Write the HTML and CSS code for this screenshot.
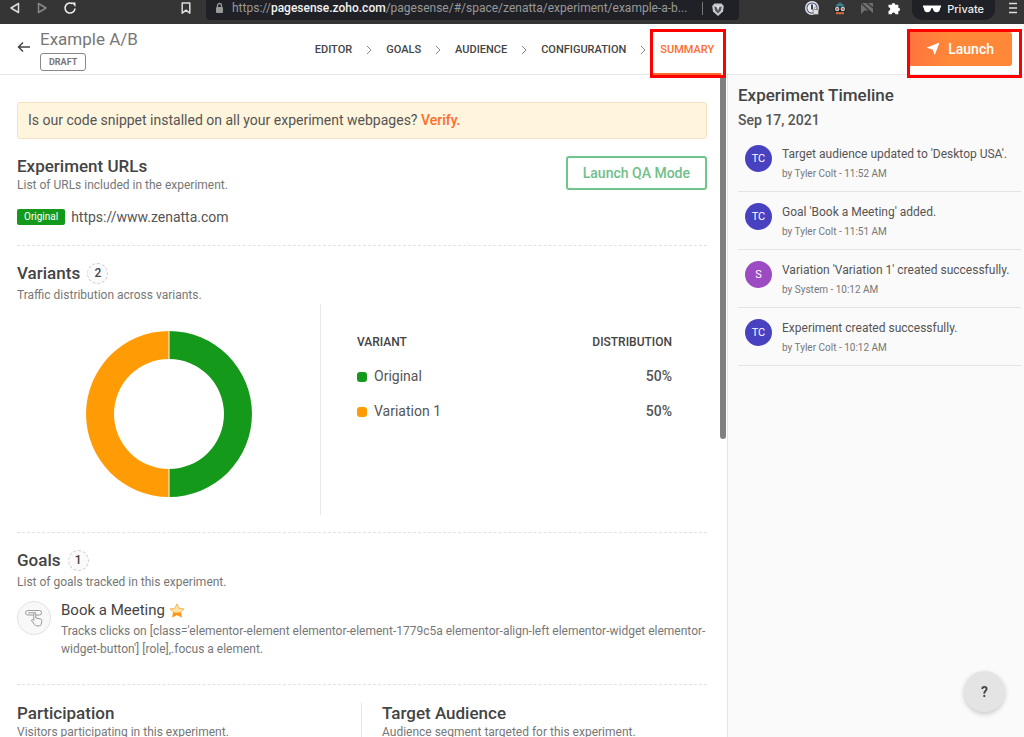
FILE: index.html
```html
<!DOCTYPE html>
<html lang="en">
<head>
<meta charset="utf-8">
<meta name="viewport" content="width=device-width, initial-scale=1">
<title>Example A/B - PageSense</title>
<link rel="stylesheet" href="styles.css">
</head>
<body>
<div class="toolbar">
  <div class="toolbar-nav">
    <button class="tool" aria-label="Back"><svg width="12" height="14" viewBox="0 0 12 14"><path d="M9.500 2.500v9L2 7z" fill="none" stroke="#ddd" stroke-width="1.500" stroke-linejoin="round"/></svg></button>
    <button class="tool" aria-label="Forward"><svg width="12" height="14" viewBox="0 0 12 14"><path d="M2.500 2.500v9L10 7z" fill="none" stroke="#888" stroke-width="1.500" stroke-linejoin="round"/></svg></button>
    <button class="tool" aria-label="Reload"><svg width="14" height="14" viewBox="0 0 14 14"><path d="M9.500 2.700A5 5 0 1 0 12 7.500" fill="none" stroke="#eee" stroke-width="1.600"/><path d="M8.500 1.500h4v4.500z" fill="#eee"/></svg></button>
  </div>
  <button class="tool bookmark" aria-label="Bookmark"><svg width="12" height="14" viewBox="0 0 12 14"><path d="M2.200 2h7.600v10.200L6 9.200l-3.800 3z" fill="none" stroke="#ddd" stroke-width="1.500" stroke-linejoin="round"/></svg></button>
  <div class="address">
    <svg width="9" height="12" viewBox="0 0 9 12"><rect x="1" y="5" width="7" height="6" rx="1" fill="#999"/><path d="M2.500 5V3.500a2 2 0 0 1 4 0V5" fill="none" stroke="#999" stroke-width="1.300"/></svg>
    <span class="url">https://<b>pagesense.zoho.com</b>/pagesense/#/space/zenatta/experiment/example-a-b...</span>
    <span class="address-bar"></span>
    <svg width="14" height="15" viewBox="0 0 14 15"><path d="M3.500 1.500h7l2.300 2.600-.8 5.400L7 14 2 9.500 1.200 4.100z" fill="#c9c9cf"/><path d="M3.300 4.500l2.400.8L7 9l1.300-3.700 2.400-.8-.8 4L7 11.500 4.100 8.500z" fill="#55555e"/><path d="M6.300 4h1.400L7 7z" fill="#fff"/></svg>
  </div>
  <div class="extensions">
    <button class="tool" aria-label="Password manager"><svg width="16" height="16" viewBox="0 0 16 16"><circle cx="8" cy="8" r="6.300" fill="#3d4a7c" stroke="#e6e6e6" stroke-width="1.400"/><circle cx="8" cy="8" r="4.600" fill="#eee"/><path d="M7 4.500h2v5H7z" fill="#33415c"/><rect x="9" y="9.500" width="5.500" height="5" rx="1" fill="#ddd" stroke="#555" stroke-width=".6"/><path d="M10.300 9.500V8.300a1.500 1.500 0 0 1 3 0v1.200" fill="none" stroke="#999"/></svg></button>
    <button class="tool" aria-label="Privacy extension"><svg width="14" height="14" viewBox="0 0 14 14"><path d="M2.500 6C3 3.500 4.500 3 5.500 2.600L7 1l1.500 1.600C9.500 3 11 3.500 11.500 6z" fill="#3b7f8c"/><rect x="1" y="5.500" width="12" height="5.500" rx="2.500" fill="#222"/><circle cx="4.200" cy="8" r="2.200" fill="#b9d4dc"/><circle cx="9.800" cy="8" r="2.200" fill="#b9d4dc"/><circle cx="4.200" cy="8" r="1.100" fill="#d04a3a"/><circle cx="9.800" cy="8" r="1.100" fill="#d04a3a"/><path d="M3 12.200h8" stroke="#d9693f" stroke-width="2"/></svg></button>
    <button class="tool" aria-label="Screenshot extension"><svg width="14" height="14" viewBox="0 0 14 14"><path d="M1 2h12v11L9.500 9.500H4.500L1 13z" fill="#6f6f6f"/><path d="M1 2L13 13M7 2l6 5" stroke="#353535" stroke-width="1.200"/></svg></button>
    <button class="tool" aria-label="Extensions"><svg width="14" height="14" viewBox="0 0 14 14"><path d="M1.500 3.700h3.200a1.800 1.800 0 1 1 3.600 0h3v3a1.800 1.800 0 1 1 0 3.600v2.900H8.400a1.800 1.800 0 1 0-3.600 0H1.500V9.900a1.800 1.800 0 1 0 0-3.600z" fill="#fff"/></svg></button>
  </div>
  <div class="private"><svg width="18" height="8" viewBox="0 0 18 8"><path d="M0 .5h18v2h-.8c0 3-1.300 4.800-3.600 4.800-2.200 0-3.400-1.500-3.800-4H8.200c-.4 2.500-1.600 4-3.800 4C2.100 7.300.8 5.500.8 2.500H0z" fill="#fff"/></svg>Private</div>
  <button class="tool" aria-label="Menu"><svg width="10" height="12" viewBox="0 0 10 12"><path d="M1 1.500h8M1 6h8M1 10.500h8" stroke="#ddd" stroke-width="1.300"/></svg></button>
</div>

<header class="header">
  <div class="experiment">
    <a class="back" href="#" aria-label="Back to experiments"><svg width="14" height="12" viewBox="0 0 14 12"><path d="M6 1.500L1.500 6 6 10.500M1.500 6H13" fill="none" stroke="#444" stroke-width="1.500"/></svg></a>
    <div class="experiment-name">
      <h1>Example A/B</h1>
      <span class="draft">DRAFT</span>
    </div>
  </div>
  <nav class="steps">
    <a href="#">EDITOR</a>
    <svg class="chevron" width="6" height="10" viewBox="0 0 6 10"><path d="M1 1l4 4-4 4"/></svg>
    <a href="#">GOALS</a>
    <svg class="chevron" width="6" height="10" viewBox="0 0 6 10"><path d="M1 1l4 4-4 4"/></svg>
    <a href="#">AUDIENCE</a>
    <svg class="chevron" width="6" height="10" viewBox="0 0 6 10"><path d="M1 1l4 4-4 4"/></svg>
    <a href="#">CONFIGURATION</a>
    <svg class="chevron" width="6" height="10" viewBox="0 0 6 10"><path d="M1 1l4 4-4 4"/></svg>
    <a class="active" href="#" aria-current="page">SUMMARY<span class="marker marker-step"></span></a>
  </nav>
  <div class="actions">
    <button class="launch"><svg width="14" height="14" viewBox="0 0 14 14"><path d="M13.500.5L8.800 13 6.600 7.600.5 5.700z" fill="#fff"/></svg>Launch</button>
    <span class="marker marker-launch"></span>
  </div>
</header>

<div class="page">
  <main class="summary">
    <div class="notice">Is our code snippet installed on all your experiment webpages? <a href="#">Verify.</a></div>

    <section class="section urls">
      <div>
        <h2>Experiment URLs</h2>
        <p class="hint">List of URLs included in the experiment.</p>
        <div class="url-row"><span class="tag">Original</span><span>https://www.zenatta.com</span></div>
      </div>
      <button class="qa">Launch QA Mode</button>
    </section>

    <section class="section variants">
      <h2>Variants <span class="count">2</span></h2>
      <p class="hint">Traffic distribution across variants.</p>
      <div class="split">
        <div class="chart">
          <svg width="168" height="168" viewBox="0 0 168 168" role="img" aria-label="Original 50%, Variation 1 50%">
            <path d="M84 1a83 83 0 0 1 0 166v-28a55 55 0 0 0 0-110z" fill="#15991b"/>
            <path d="M84 1a83 83 0 0 0 0 166v-28a55 55 0 0 1 0-110z" fill="#ff9b04"/>
            <path d="M84 1v28M84 139v28" stroke="#fff"/>
          </svg>
        </div>
        <div class="distribution">
          <table>
            <thead><tr><th>VARIANT</th><th>DISTRIBUTION</th></tr></thead>
            <tbody>
              <tr><td><span class="swatch green"></span>Original</td><td>50%</td></tr>
              <tr><td><span class="swatch orange"></span>Variation 1</td><td>50%</td></tr>
            </tbody>
          </table>
        </div>
      </div>
    </section>

    <section class="section goals">
      <h2>Goals <span class="count">1</span></h2>
      <p class="hint">List of goals tracked in this experiment.</p>
      <div class="goal">
        <span class="goal-icon"><svg width="20" height="18" viewBox="0 0 20 18" fill="none" stroke="#999"><rect x="1.500" y="1.500" width="16" height="4.500" rx="2.200"/><path d="M4 3.800h8"/><path d="M9.800 10V5.500c0-1.500 2-1.500 2 0V9l4.700 1c1.300.3 1.500 1 1.300 2.300l-.6 3c-.2 1-.7 1.500-1.700 1.500h-3c-.8 0-1.300-.4-1.800-1L7.800 12c-.8-1.200.5-2 1.300-1.200l.7.700z" fill="#f8f8f8"/></svg></span>
        <div>
          <h3>Book a Meeting <svg width="16" height="15" viewBox="0 0 16 15"><path d="M8 .8l2.100 4.500 5 .6-3.700 3.300 1 4.900L8 11.700 3.600 14.100l1-4.900L.9 5.900l5-.6z" fill="#ffe3a8" stroke="#f7a63c" stroke-width=".8"/><path d="M4 9.500h8l.5 4.600L8 11.700l-4.400 2.400z" fill="#ff9416"/></svg></h3>
          <p>Tracks clicks on [class='elementor-element elementor-element-1779c5a elementor-align-left elementor-widget elementor-widget-button'] [role],.focus a element.</p>
        </div>
      </div>
    </section>

    <div class="columns">
      <section>
        <h2>Participation</h2>
        <p class="hint">Visitors participating in this experiment.</p>
      </section>
      <section>
        <h2>Target Audience</h2>
        <p class="hint">Audience segment targeted for this experiment.</p>
      </section>
    </div>
    <span class="scroll-thumb"></span>
  </main>

  <aside class="timeline">
    <h2>Experiment Timeline</h2>
    <h3>Sep 17, 2021</h3>
    <ul>
      <li><span class="avatar">TC</span><div><p>Target audience updated to 'Desktop USA'.</p><small>by Tyler Colt - 11:52 AM</small></div></li>
      <li><span class="avatar">TC</span><div><p>Goal 'Book a Meeting' added.</p><small>by Tyler Colt - 11:51 AM</small></div></li>
      <li><span class="avatar system">S</span><div><p>Variation 'Variation 1' created successfully.</p><small>by System - 10:12 AM</small></div></li>
      <li><span class="avatar">TC</span><div><p>Experiment created successfully.</p><small>by Tyler Colt - 10:12 AM</small></div></li>
    </ul>
  </aside>
</div>
<button class="help" aria-label="Help">?</button>
</body>
</html>
```

FILE: styles.css
```css
* { box-sizing: border-box; }
body {
  margin: 0;
  height: 100vh;
  overflow: hidden;
  display: flex;
  flex-direction: column;
  font-family: Roboto, "Liberation Sans", sans-serif;
  font-size: 14px;
  color: #555;
  background: #fff;
}
h1, h2, h3, p, ul { margin: 0; padding: 0; }
ul { list-style: none; }
button { font: inherit; cursor: pointer; }
a { color: inherit; text-decoration: none; }
svg { display: block; flex: none; }

/* Browser toolbar */
.toolbar {
  flex: none;
  height: 24px;
  display: flex;
  align-items: flex-start;
  padding: 0 6px 0 9px;
  background: #353535;
  font-size: 12px;
}
.tool {
  display: flex;
  align-items: center;
  height: 16px;
  padding: 0;
  border: 0;
  background: none;
}
.toolbar-nav { display: flex; gap: 15px; }
.bookmark { margin-left: 103px; }
.address {
  flex: 1;
  min-width: 0;
  height: 20px;
  display: flex;
  align-items: flex-start;
  gap: 8px;
  margin-left: 14px;
  padding: 2px 14px 0 9px;
  background: #202126;
  border-radius: 0 0 4px 4px;
  color: #999;
}
.url { flex: 1; line-height: 13px; white-space: nowrap; }
.url b { font-weight: 500; color: #f2f2f2; }
.address-bar { width: 1px; height: 13px; background: #777; }
.extensions { display: flex; gap: 13px; margin: 0 11px 0 65px; }
.private {
  height: 20px;
  display: flex;
  align-items: center;
  gap: 6px;
  padding: 0 11px 3px;
  margin-right: 13px;
  border-radius: 0 0 10px 10px;
  background: #202126;
  color: #eee;
  font-family: Inter, sans-serif;
  font-size: 11px;
  font-weight: 500;
}

/* Experiment header */
.header {
  flex: none;
  height: 51px;
  display: grid;
  grid-template-columns: 1fr auto 1fr;
  padding: 0 12px 0 17px;
  border-bottom: 1px solid #e8e8e8;
  position: relative;
  z-index: 2;
  background: #fff;
}
.experiment { display: flex; align-items: flex-start; gap: 9px; }
.back { padding: 17px 0 0; }
.experiment-name { padding-top: 5px; }
h1 { font-size: 17px; line-height: 20px; font-weight: 400; color: #777; }
.draft {
  display: block;
  width: max-content;
  margin-top: 4px;
  padding: 0 8px;
  border: 1px solid #888;
  border-radius: 3px;
  font-size: 9px;
  line-height: 16px;
  font-weight: 700;
  color: #777;
}
.steps {
  display: flex;
  gap: 14px;
  font-size: 11px;
  line-height: 51px;
  font-weight: 500;
  color: #444;
}
.chevron { align-self: center; fill: none; stroke: #888; }
.active { position: relative; color: #ff6c2c; }
.active::after {
  content: "";
  position: absolute;
  left: -7px;
  right: -7px;
  bottom: 0;
  height: 2px;
  background: #ff6c2c;
}
.marker { position: absolute; border: 3px solid #f00; z-index: 3; pointer-events: none; }
.marker-step { top: 5px; bottom: -3px; left: -10px; right: -12px; }
.actions { position: relative; display: flex; justify-content: flex-end; align-items: flex-start; padding-top: 8px; }
.marker-launch { top: 5px; bottom: -3px; right: -10px; width: 115px; }
.launch {
  height: 34px;
  display: flex;
  align-items: center;
  gap: 8px;
  padding: 0 18px;
  border: 0;
  border-radius: 3px;
  background: linear-gradient(90deg, #ff7340, #ff8838 40%);
  color: #fff;
  font-size: 14px;
  font-weight: 500;
}

/* Page body */
.page { flex: 1; min-height: 0; display: grid; grid-template-columns: 1fr 297px; }
.summary { position: relative; min-width: 0; overflow: hidden; padding: 27px 20px 0 17px; }
.scroll-thumb {
  position: absolute;
  top: 0;
  right: 1px;
  width: 6px;
  height: 55%;
  border-radius: 0 0 3px 3px;
  background: #7f807f;
}
.notice {
  padding: 0 10px;
  border: 1px solid #f3e1c4;
  border-radius: 3px;
  background: #fff4dc;
  font-size: 14px;
  line-height: 35px;
}
.notice a { color: #ff6c2c; font-weight: 500; }
h2 { font-size: 17px; line-height: 22px; font-weight: 500; color: #444; }
.hint { font-size: 12px; line-height: 16px; color: #777; }
.section { border-bottom: 1px dashed #e2e2e2; }
.urls { display: flex; justify-content: space-between; align-items: flex-start; padding: 16px 0 18px; }
.url-row { display: flex; align-items: center; gap: 6px; margin-top: 14px; line-height: 20px; }
.tag { padding: 0 7px; border-radius: 2px; background: #15991b; color: #fff; font-size: 10px; line-height: 16px; }
.qa {
  height: 34px;
  margin-top: 1px;
  padding: 0 15px;
  border: 2px solid #70c68a;
  border-radius: 3px;
  background: #fff;
  color: #70c08a;
  font-size: 14px;
  font-weight: 500;
}
.count {
  display: inline-block;
  width: 21px;
  height: 21px;
  margin-left: 3px;
  border: 1px dashed #ccc;
  border-radius: 50%;
  background: #fafafa;
  font-size: 12px;
  line-height: 19px;
  text-align: center;
  vertical-align: 2px;
}
.variants { padding: 16px 0 17px; }
.variants .hint, .goals .hint { margin-top: 3px; }
.split { display: grid; grid-template-columns: 304px 1fr; margin-top: 1px; }
.chart { height: 211px; display: grid; place-items: center; padding-top: 8px; border-right: 1px solid #e8e8e8; }
.distribution { padding: 25px 35px 0 36px; }
table { width: 100%; border-collapse: collapse; }
th, td { padding: 0; text-align: left; }
th { font-size: 12px; line-height: 26px; font-weight: 500; color: #444; }
td { font-size: 14px; height: 35px; }
thead + tbody td { padding-top: 6px; }
th:last-child, td:last-child { text-align: right; }
td:last-child { font-weight: 500; }
.swatch { display: inline-block; width: 10px; height: 10px; margin-right: 7px; border-radius: 3px; vertical-align: -1px; }
.green { background: #15991b; }
.orange { background: #ff9b04; }
.goals { padding: 16px 0 26px; }
.goal { display: flex; gap: 10px; margin-top: 9px; }
.goal-icon {
  flex: none;
  width: 34px;
  height: 34px;
  margin-top: 2px;
  display: grid;
  place-items: center;
  border: 1px solid #e2e2e2;
  border-radius: 50%;
  background: #f8f8f8;
}
.goal h3 { display: flex; align-items: center; gap: 4px; font-size: 15px; line-height: 23px; font-weight: 400; color: #444; }
.goal p { font-size: 12px; line-height: 18px; color: #777; }
.columns { display: grid; grid-template-columns: 344px 1fr; padding-top: 17px; }
.columns section + section { border-left: 1px solid #e8e8e8; padding-left: 20px; min-height: 80px; }

/* Timeline */
.timeline { padding: 9px 3px 0 10px; border-left: 1px solid #e4e4e4; background: #fafafa; }
.timeline h3 { margin-top: 4px; font-size: 14px; line-height: 20px; font-weight: 500; }
.timeline ul { margin-top: 4px; }
.timeline li { height: 58px; display: flex; gap: 10px; padding: 10px 0 0 7px; border-bottom: 1px solid #e4e4e4; }
.avatar {
  flex: none;
  width: 27px;
  height: 27px;
  margin-top: 1px;
  border-radius: 50%;
  background: #4842c0;
  color: #fff;
  font-size: 11px;
  line-height: 27px;
  text-align: center;
}
.system { background: #9d4bc3; }
.timeline p { font-size: 12px; line-height: 20px; white-space: nowrap; }
.timeline small { display: block; font-size: 10px; line-height: 20px; color: #777; }

.help {
  position: fixed;
  right: 19px;
  bottom: 25px;
  width: 41px;
  height: 41px;
  padding: 0;
  border: 0;
  border-radius: 50%;
  background: #e4e4e4;
  box-shadow: 0 2px 5px rgba(0, 0, 0, .2);
  color: #444;
  font-size: 14px;
  font-weight: 700;
}
```
